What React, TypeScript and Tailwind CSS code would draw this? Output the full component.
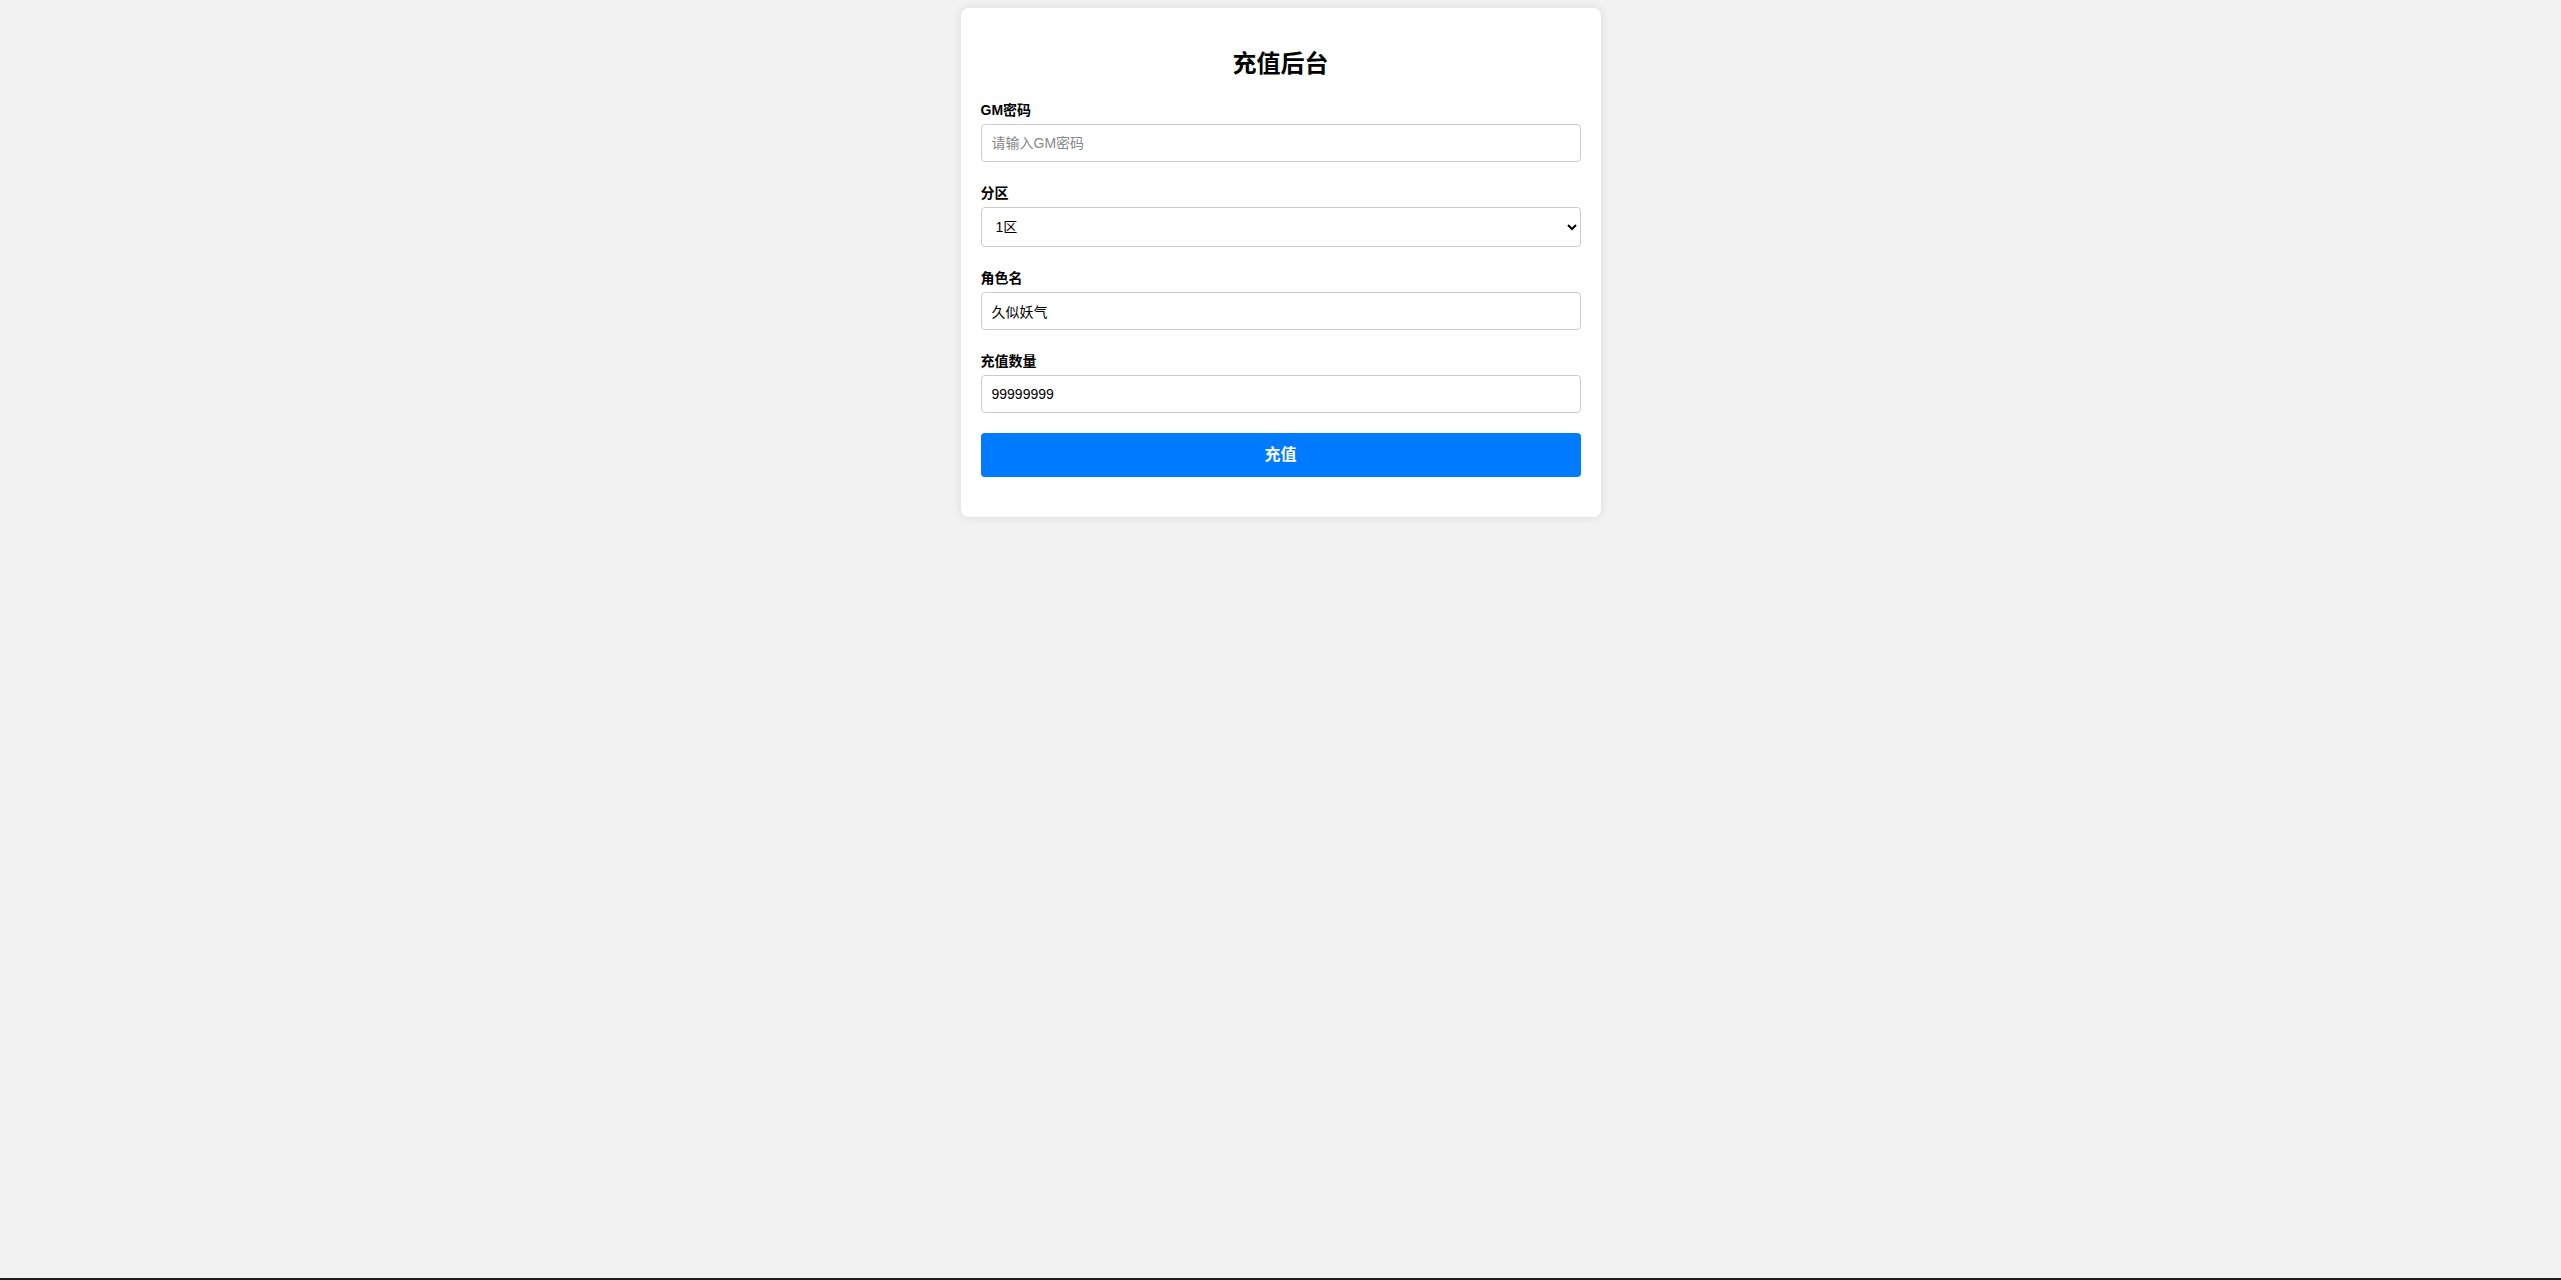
import { useState } from "react";

const fontStack = "font-['Liberation_Sans','Noto_Sans_CJK_SC',sans-serif]";

export default function App() {
  const [password, setPassword] = useState("");
  const [zone, setZone] = useState("1");
  const [role, setRole] = useState("久似妖气");
  const [amount, setAmount] = useState("99999999");

  return (
    <div className={`flex h-[1280px] flex-col bg-[#f2f2f2] ${fontStack}`}>
      <div className="flex-1 pt-2">
        <div className="mx-auto w-[640px] rounded-lg bg-white p-5 shadow-[0_0_10px_rgba(0,0,0,0.1)]">
          <h2 className="mt-[22px] mb-[24px] text-center text-2xl leading-[28px] font-bold text-black">
            充值后台
          </h2>

          <form className="flex flex-col" onSubmit={(e) => e.preventDefault()}>
            {/* GM password */}
            <label className="mb-[5px] block text-sm leading-[17px] font-bold text-black">
              GM密码
            </label>
            <input
              type="password"
              value={password}
              onChange={(e) => setPassword(e.target.value)}
              placeholder="请输入GM密码"
              className="mb-[23px] h-[38px] w-full rounded border border-[#ccc] px-[10px] text-sm text-black placeholder:text-[#888] outline-none"
            />

            {/* zone */}
            <label className="mb-[5px] block text-sm leading-[17px] font-bold text-black">
              分区
            </label>
            <select
              value={zone}
              onChange={(e) => setZone(e.target.value)}
              className="mb-[23px] h-[40px] w-full rounded border border-[#ccc] bg-white px-[10px] text-sm text-black outline-none"
            >
              <option value="1">1区</option>
              <option value="2">2区</option>
              <option value="3">3区</option>
            </select>

            {/* role name */}
            <label className="mb-[5px] block text-sm leading-[17px] font-bold text-black">
              角色名
            </label>
            <input
              type="text"
              value={role}
              onChange={(e) => setRole(e.target.value)}
              className="mb-[23px] h-[38px] w-full rounded border border-[#ccc] px-[10px] text-sm text-black outline-none"
            />

            {/* amount */}
            <label className="mb-[5px] block text-sm leading-[17px] font-bold text-black">
              充值数量
            </label>
            <input
              type="text"
              value={amount}
              onChange={(e) => setAmount(e.target.value)}
              className="mb-[20px] h-[38px] w-full rounded border border-[#ccc] px-[10px] text-sm text-black outline-none"
            />

            <button
              type="submit"
              className="mb-5 h-[44px] w-full rounded bg-[#007bff] text-base font-bold text-white"
            >
              充值
            </button>
          </form>
        </div>
      </div>
      <div className="h-[2px] bg-[#1c1c1c]" />
    </div>
  );
}
